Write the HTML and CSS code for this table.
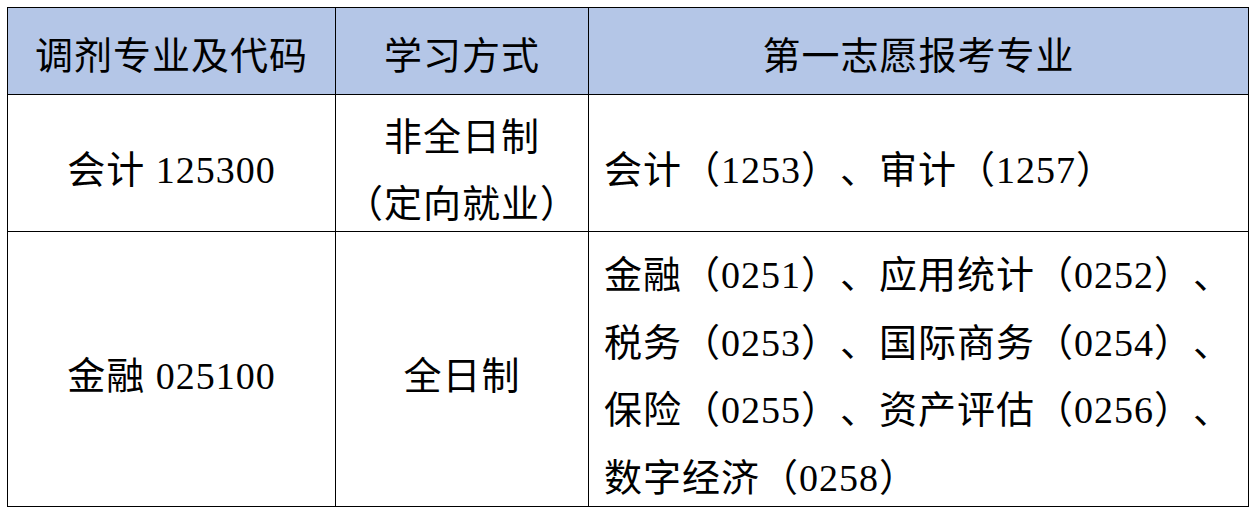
FILE: index.html
```html
<!DOCTYPE html>
<html lang="zh-CN">
<head>
<meta charset="utf-8">
<title>调剂专业</title>
<link rel="stylesheet" href="styles.css">
</head>
<body>
<div class="page">
  <div class="adj" role="table">
    <div class="cell head" role="columnheader">调剂专业及代码</div>
    <div class="cell head" role="columnheader">学习方式</div>
    <div class="cell head" role="columnheader">第一志愿报考专业</div>

    <div class="cell mid" role="cell">会计 125300</div>
    <div class="cell mid" role="cell"><div>非全日制<br>（定向就业）</div></div>
    <div class="cell list" role="cell">会计（1253）、审计（1257）</div>

    <div class="cell mid" role="cell">金融 025100</div>
    <div class="cell mid" role="cell">全日制</div>
    <div class="cell list" role="cell"><div>金融（0251）、应用统计（0252）、<br>税务（0253）、国际商务（0254）、<br>保险（0255）、资产评估（0256）、<br>数字经济（0258）</div></div>
  </div>
</div>
</body>
</html>
```
FILE: styles.css
```css
html, body {
  margin: 0;
  padding: 0;
  background: #ffffff;
}

.page {
  padding: 7px;
}

.adj {
  display: grid;
  grid-template-columns: 327px 252px 659px;
  grid-template-rows: 86px 136px 274px;
  gap: 1px;
  width: max-content;
  background: #000;
  border: 1px solid #000;
  font-family: "Liberation Serif", "Noto Sans CJK SC", serif;
  font-size: 38px;
  letter-spacing: 1px;
  color: #000;
  text-spacing-trim: space-all;
}

.cell {
  background: #fff;
  display: flex;
  align-items: center;
  padding-top: 16px;
  line-height: 67.5px;
  white-space: nowrap;
  overflow: visible;
  min-height: 0;
}

.head {
  background: #b4c6e7;
  justify-content: center;
  padding-top: 12px;
}

.mid {
  justify-content: center;
  text-align: center;
}

.list {
  justify-content: flex-start;
  text-align: left;
  padding-left: 15px;
}
```
